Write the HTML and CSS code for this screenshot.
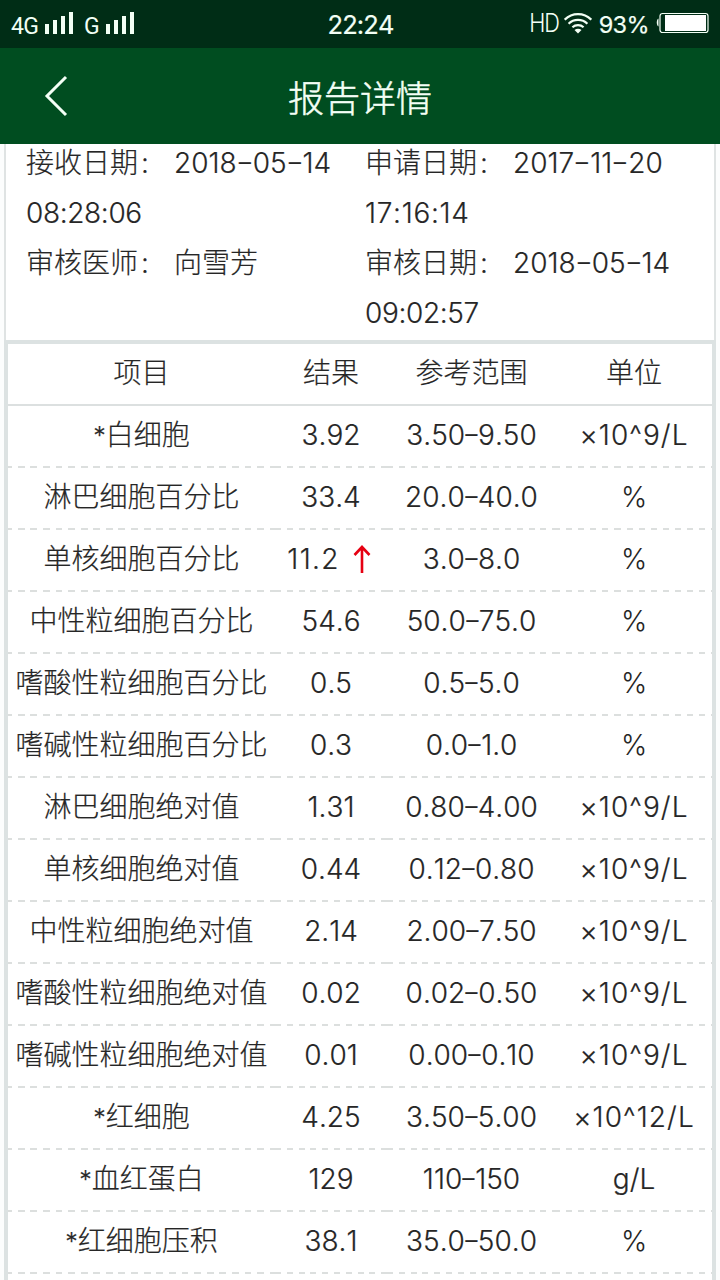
FILE: index.html
```html
<!DOCTYPE html>
<html lang="zh-CN">
<head>
<meta charset="utf-8">
<title>报告详情</title>
<link rel="stylesheet" href="styles.css">
</head>
<body>
<div class="screen">
  <header class="status">
    <div class="status-left">
      <span class="net net-4g">4G</span>
      <svg class="signal" width="29" height="22" viewBox="0 0 29 22" fill="currentColor"><path d="M0 12h4v10H0zM8 8h4v14H8zM16 4h4v18h-4zM24 0h4v22h-4z"/></svg>
      <span class="net net-g">G</span>
      <svg class="signal" width="29" height="22" viewBox="0 0 29 22" fill="currentColor"><path d="M0 12h4v10H0zM8 8h4v14H8zM16 4h4v18h-4zM24 0h4v22h-4z"/></svg>
    </div>
    <div class="clock">22:24</div>
    <div class="status-right">
      <span class="hd">HD</span>
      <svg class="wifi" width="28" height="21" viewBox="0 0 28 21" fill="none" stroke="currentColor" stroke-width="2.200"><path d="M.7 6.700C8.200-.700 19.800-.700 27.300 6.700M4.600 10.700c5.300-5 13.500-5 18.800 0M8.400 14.300c3.200-2.900 8-2.900 11.200 0"/><path d="M10.500 17c2-1.800 5-1.800 7 0L14 20.600z" fill="currentColor" stroke="none"/></svg>
      <span class="percent">93%</span>
      <svg class="battery" width="53" height="22" viewBox="0 0 53 22"><path d="M2.500 6.500C.2 7.500.2 13.500 2.500 14.500z" fill="currentColor"/><rect x="4" y="1.500" width="48" height="19" rx="2.500" fill="none" stroke="currentColor" stroke-width="1.200"/><path d="M9 3h41v16H9z" fill="#fff"/></svg>
    </div>
  </header>
  <nav class="navbar">
    <svg class="back" width="24" height="42" viewBox="0 0 24 42" fill="none" stroke="currentColor" stroke-width="3"><path d="M22 2 3 21l19 19"/></svg>
    <h1 class="title">报告详情</h1>
  </nav>
  <main class="report">
    <section class="info">
      <div class="field">
        <p class="line"><span class="label">接收日期 :</span><span class="value">2018<i>-</i>05<i>-</i>14</span></p>
        <p class="line time">08:28:06</p>
      </div>
      <div class="field">
        <p class="line"><span class="label">申请日期 :</span><span class="value">2017<i>-</i>11<i>-</i>20</span></p>
        <p class="line time ones">17:16:14</p>
      </div>
      <div class="field">
        <p class="line"><span class="label">审核医师 :</span><span class="value">向雪芳</span></p>
      </div>
      <div class="field">
        <p class="line"><span class="label">审核日期 :</span><span class="value">2018<i>-</i>05<i>-</i>14</span></p>
        <p class="line time">09:02:57</p>
      </div>
    </section>
    <table class="results">
      <colgroup><col class="c-name"><col class="c-value"><col class="c-range"><col class="c-unit"></colgroup>
      <thead><tr><th>项目</th><th>结果</th><th>参考范围</th><th>单位</th></tr></thead>
      <tbody>
        <tr><td><b>*</b>白细胞</td><td>3.92</td><td>3.50<i>-</i>9.50</td><td>×10^9/L</td></tr>
        <tr><td>淋巴细胞百分比</td><td>33.4</td><td>20.0<i>-</i>40.0</td><td class="pct">%</td></tr>
        <tr><td>单核细胞百分比</td><td class="high">11.2<svg class="arrow" width="18" height="28" viewBox="0 0 18 28" fill="none" stroke="currentColor" stroke-width="2.600"><path d="M9 28V2M1.500 10 9 2l7.500 8"/></svg></td><td>3.0<i>-</i>8.0</td><td class="pct">%</td></tr>
        <tr><td>中性粒细胞百分比</td><td>54.6</td><td>50.0<i>-</i>75.0</td><td class="pct">%</td></tr>
        <tr><td>嗜酸性粒细胞百分比</td><td>0.5</td><td>0.5<i>-</i>5.0</td><td class="pct">%</td></tr>
        <tr><td>嗜碱性粒细胞百分比</td><td>0.3</td><td>0.0<i>-</i>1.0</td><td class="pct">%</td></tr>
        <tr><td>淋巴细胞绝对值</td><td>1.31</td><td>0.80<i>-</i>4.00</td><td>×10^9/L</td></tr>
        <tr><td>单核细胞绝对值</td><td>0.44</td><td>0.12<i>-</i>0.80</td><td>×10^9/L</td></tr>
        <tr><td>中性粒细胞绝对值</td><td>2.14</td><td>2.00<i>-</i>7.50</td><td>×10^9/L</td></tr>
        <tr><td>嗜酸性粒细胞绝对值</td><td>0.02</td><td>0.02<i>-</i>0.50</td><td>×10^9/L</td></tr>
        <tr><td>嗜碱性粒细胞绝对值</td><td>0.01</td><td>0.00<i>-</i>0.10</td><td>×10^9/L</td></tr>
        <tr><td><b>*</b>红细胞</td><td>4.25</td><td>3.50<i>-</i>5.00</td><td>×10^12/L</td></tr>
        <tr><td><b>*</b>血红蛋白</td><td>129</td><td>110<i>-</i>150</td><td class="mass">g/L</td></tr>
        <tr><td><b>*</b>红细胞压积</td><td>38.1</td><td>35.0<i>-</i>50.0</td><td class="pct">%</td></tr>
        <tr><td></td><td></td><td></td><td></td></tr>
      </tbody>
    </table>
  </main>
</div>
</body>
</html>
```
FILE: styles.css
```css
* { box-sizing: border-box; margin: 0; padding: 0; }
body { background: #fcfdfd; }
.screen {
  width: 720px;
  height: 1280px;
  overflow: hidden;
  display: flex;
  flex-direction: column;
  font: 300 28px/50px Inter, "Noto Sans CJK SC", sans-serif;
  font-kerning: none;
  color: #262626;
  -webkit-text-stroke: 0.2px currentColor;
}
.status {
  flex: none;
  height: 48px;
  display: grid;
  grid-template-columns: 1fr auto 1fr;
  align-items: center;
  padding: 0 11px 0 11px;
  background: #002d16;
  color: #f2fff5;
  line-height: 48px;
  -webkit-text-stroke: 0;
}
.status-left, .status-right { display: flex; align-items: center; }
.status-right { justify-content: flex-end; }
.signal { margin-top: -3px; }
.net { height: 48px; font: 400 23px/44px Roboto, sans-serif; padding-top: 4px; }
.net-4g { width: 34px; letter-spacing: -0.8px; }
.net-g { width: 21px; margin-left: 10px; margin-right: 1px; }
.clock { font-size: 25.500px; font-weight: 400; letter-spacing: -0.9px; padding: 1px 0 0 1px; -webkit-text-stroke: 0.2px currentColor; }
.hd { font-size: 25px; letter-spacing: -1.5px; margin-right: 5px; margin-top: -3px; transform: scaleX(0.87); transform-origin: right; }
.wifi { margin: -3px 7px 0 0; }
.percent { font-size: 23.500px; font-weight: 400; letter-spacing: -0.6px; margin-right: 7px; -webkit-text-stroke: 0.2px currentColor; }
.battery { margin-top: -4px; }
.navbar {
  flex: none;
  height: 96px;
  display: grid;
  grid-template-columns: 90px 1fr 90px;
  align-items: center;
  background: #004d20;
  color: #f4fff6;
}
.back { margin: -4px 0 0 44px; }
.title { font-size: 36px; font-weight: 300; line-height: 96px; text-align: center; padding-top: 3px; -webkit-text-stroke-width: 0.5px; }
.report { flex: 1; min-height: 0; overflow: hidden; padding: 0 4px; }
.info {
  height: 196px;
  display: grid;
  grid-template-columns: 339px 1fr;
  grid-template-rows: 100px 100px;
  padding: 0 0 2px 20px;
  align-content: end;
  background: #fff;
  border: solid #dfe3e3;
  border-width: 0 2px;
}
.line { display: flex; white-space: nowrap; height: 50px; }
.label { width: 148px; word-spacing: -5px; }
.time { letter-spacing: -0.35px; }
.ones { letter-spacing: 0.7px; }
i { display: inline-block; width: 16px; font-style: normal; text-align: center; transform: translateY(-1px) scaleX(1.4); }
td i { width: 13px; }
b { font-size: 25px; font-weight: 300; line-height: 1; }
.results {
  width: 712px;
  table-layout: fixed;
  border-spacing: 0;
  background: #fff;
  border: 4px solid #dce2e2;
  border-bottom: 0;
}
.c-name { width: 267px; }
.c-value { width: 112px; }
.c-range { width: 168px; }
.results th, .results td {
  height: 62px;
  line-height: 56px;
  font-weight: 300;
  text-align: center;
  white-space: nowrap;
}
.results th { border-bottom: 2px solid #dce0e0; padding-bottom: 2px; }
.results th:nth-child(n+3), .results td:nth-child(n+3) { padding-left: 1px; }
.results td {
  padding-bottom: 4px;
  background: repeating-linear-gradient(90deg, #dcdfde 0 6px, transparent 6px 11.800px) 0 100% / 100% 2px no-repeat;
}
.results td:first-child {
  background-image: repeating-linear-gradient(90deg, #dcdfde 0 4px, transparent 4px 9.700px, #dcdfde 9.700px 12.600px);
}
.results td:last-child {
  letter-spacing: 1.1px;
  background-image: repeating-linear-gradient(90deg, #dcdfde -1px 5px, transparent 5px 11.100px);
}
.results td.pct { letter-spacing: 0; -webkit-text-stroke: 0; }
.results td.mass { letter-spacing: 0; }
.results td.high { letter-spacing: 1.3px; padding-right: 4px; }
.high .arrow { color: #e60012; margin-left: 13px; vertical-align: -4px; }
```
